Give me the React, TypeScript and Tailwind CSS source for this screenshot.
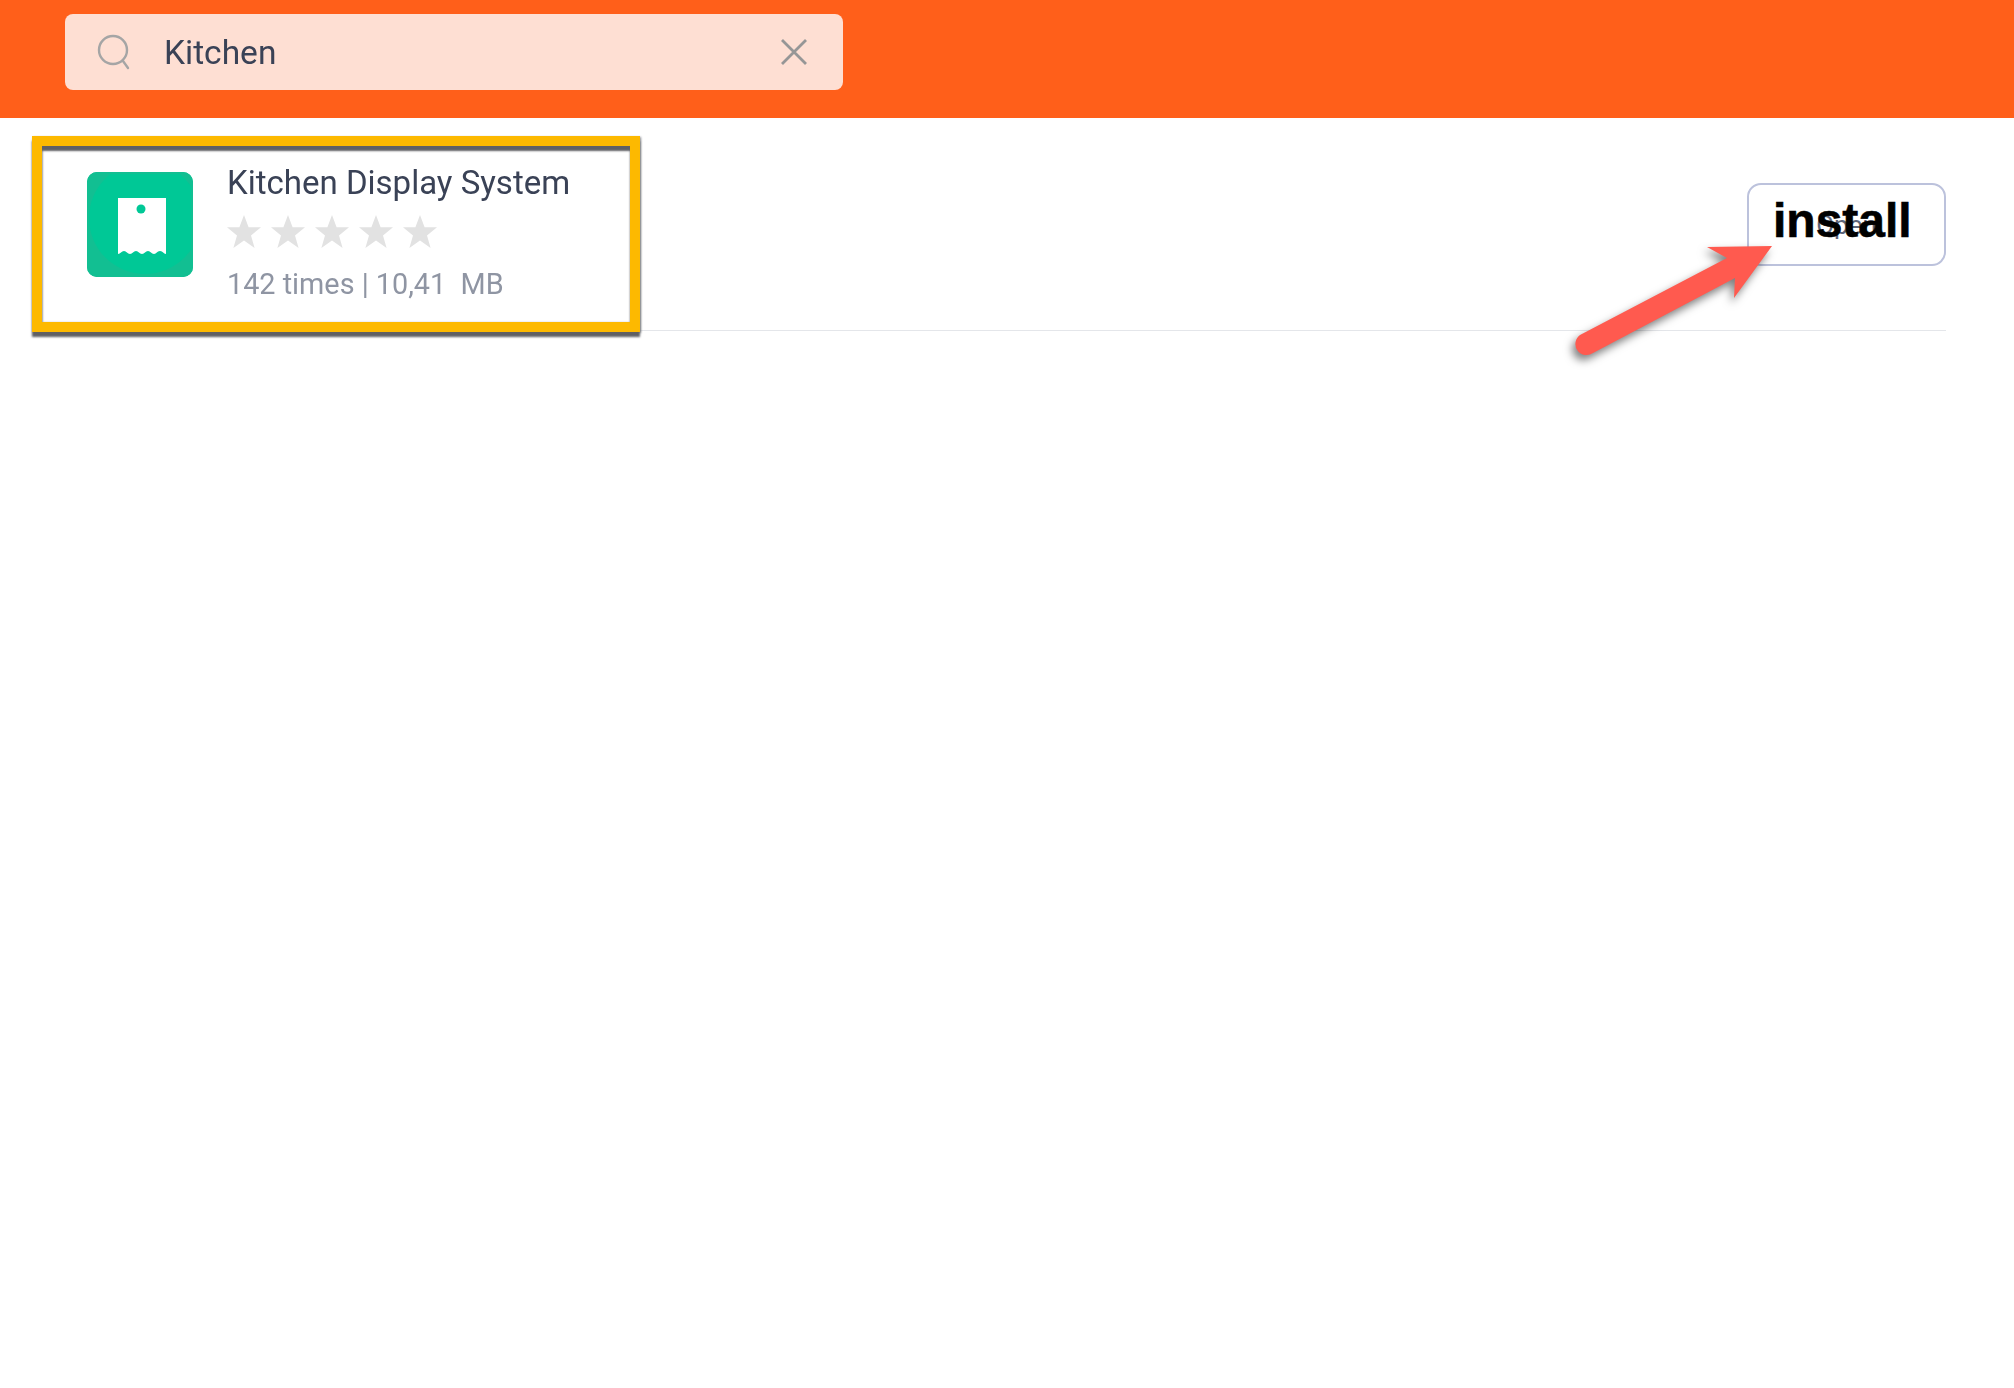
export default function App() {
  const stars = [0, 1, 2, 3, 4];
  return (
    <div className="relative min-h-[1388px] w-[2014px] overflow-hidden bg-white font-['Roboto',sans-serif]">
      <header className="h-[118px] bg-[#ff5f1a] pl-[65px] pt-[14px]">
        <div className="flex h-[76px] w-[778px] items-center rounded-lg bg-[#fedfd3] pl-[32px] pr-[36px]">
          <svg width="36" height="36" viewBox="0 0 36 36" fill="none" className="shrink-0 text-[#a5a5a5] blur-[0.4px]">
            <circle cx="16" cy="16" r="14" stroke="currentColor" strokeWidth="2.4" />
            <path d="M26 27l5 7" stroke="currentColor" strokeWidth="2.4" strokeLinecap="round" />
          </svg>
          <span className="ml-[31px] mt-[2px] text-[33.5px] leading-none text-[#3a4256] blur-[0.4px]">Kitchen</span>
          <svg width="26" height="26" viewBox="0 0 26 26" fill="none" className="ml-auto shrink-0 text-[#969696] blur-[0.3px]">
            <path d="M1 1l24 24M25 1L1 25" stroke="currentColor" strokeWidth="2.800" />
          </svg>
        </div>
      </header>

      <section className="ml-[32px] flex h-[213px] w-[1914px] items-start justify-between border-b border-[#e4e6ea]">
        <div className="mt-[18px] flex h-[196px] w-[608px] shrink-0 border-[10px] border-[#fdb900] bg-white pl-[45px] pt-[26px] shadow-[0_5px_2px_#5f6064,1px_1px_2px_#8a8b90,inset_0_5px_2px_#5f6064,inset_1px_0_2px_#c4c6cc]">
          <svg width="106" height="105" viewBox="0 0 106 105" className="shrink-0 blur-[0.7px]">
            <rect width="106" height="105" rx="10" fill="#12bf92" />
            <circle cx="58" cy="46" r="56" fill="#00c896" />
            <rect x="1" y="1" width="104" height="103" rx="9" fill="none" stroke="#12bf92" strokeWidth="2" />
            <path d="M31 26h48v56c-2.500 0-3-3-6-3s-3.500 3-6 3-3.500-3-6-3-3.500 3-6 3-3.500-3-6-3-3.500 3-6 3-3.500-3-6-3-3.500 3-6 3z" fill="#fff" />
            <circle cx="54" cy="37" r="4.500" fill="#00c896" />
          </svg>
          <div className="ml-[34px] flex flex-col">
            <div className="mt-[-9px] text-[33px] leading-[40px] whitespace-nowrap text-[#3a4256] blur-[0.4px]">Kitchen Display System</div>
            <div className="mt-[12px] flex gap-[10px]">
              {stars.map((s) => (
                <svg key={s} width="34" height="33" viewBox="0 0 34 33" className="blur-[0.3px]">
                  <path d="M17 0l4.600 12.300H34l-10 8.200L27.600 33 17 25.400 6.400 33 10 20.500 0 12.300h12.400z" fill="#e2e2e2" />
                </svg>
              ))}
            </div>
            <div className="mt-[16px] text-[28.8px] leading-[40px] whitespace-pre text-[#8f95a3] blur-[0.4px]">142 times | 10,41  MB</div>
          </div>
        </div>

        <button className="relative mt-[65px] flex h-[83px] w-[199px] items-center justify-center rounded-[14px] border-2 border-[#bcc2dc] bg-white">
          <span className="mt-[1px] text-[26px] leading-none text-[#5d6579]">Open</span>
          <span className="absolute left-[24px] top-[8px] font-['Liberation_Sans',sans-serif] text-[48px] leading-[55px] font-bold text-black [-webkit-text-stroke:0.6px_#000]">install</span>
        </button>
      </section>

      <svg width="230" height="130" viewBox="0 0 230 130" className="absolute left-[1565px] top-[235px] drop-shadow-[-3px_5px_4px_rgba(0,0,0,0.5)]">
        <path d="M15 100L162 23 142 12 207 11 169 63 170 43 28 118A11 11 0 0 1 15 100z" fill="#ff5a4f" />
      </svg>
    </div>
  );
}
